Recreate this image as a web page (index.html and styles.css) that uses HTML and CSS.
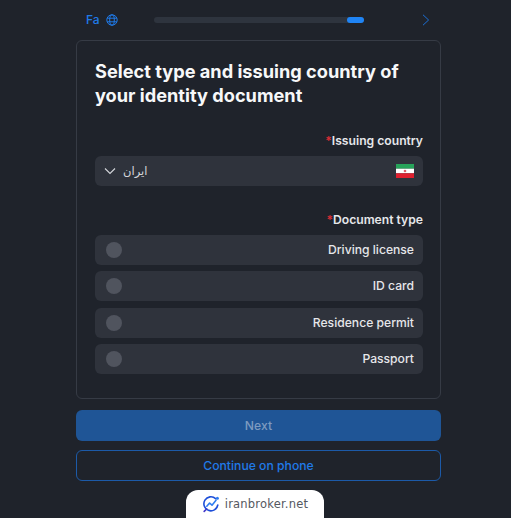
FILE: index.html
```html
<!DOCTYPE html>
<html lang="en">
<head>
<meta charset="utf-8">
<title>Identity document</title>
<link rel="stylesheet" href="styles.css">
</head>
<body>
<main class="page">
  <header class="topbar">
    <div class="lang">
      <span>Fa</span>
      <svg class="globe" viewBox="0 0 12 12" width="12" height="12" fill="none" stroke="#1f7ae8" stroke-width="1">
        <circle cx="6" cy="6" r="5.2"/>
        <ellipse cx="6" cy="6" rx="2.3" ry="5.2"/>
        <path d="M1.2 4.2h9.6M1.2 7.8h9.6"/>
      </svg>
    </div>
    <div class="progress"><div class="progress-fill"></div></div>
    <svg class="next-arrow" viewBox="0 0 8 12" width="8" height="12" fill="none" stroke="#1c6fd6" stroke-width="1">
      <path d="M1 .8 6.6 6 1 11.2"/>
    </svg>
  </header>

  <section class="card">
    <h1 class="title">Select type and issuing country of your identity document</h1>

    <div class="field country-field">
      <label class="label"><span class="star">*</span>Issuing country</label>
      <div class="select">
        <div class="select-value">
          <svg class="chevron" viewBox="0 0 12 8" width="12" height="8" fill="none" stroke="#d5d7db" stroke-width="1.1">
            <path d="M1 1.5 6 6.5 11 1.5"/>
          </svg>
          <span class="country-name" lang="fa" dir="rtl">ایران</span>
        </div>
        <svg class="flag" viewBox="0 0 18 14" width="18" height="14">
          <rect width="18" height="4.7" fill="#27a35a"/>
          <rect y="4.7" width="18" height="4.6" fill="#fff"/>
          <rect y="9.3" width="18" height="4.7" fill="#e0202f"/>
          <circle cx="9" cy="7" r="1.3" fill="#e0606a"/>
        </svg>
      </div>
    </div>

    <div class="field">
      <label class="label"><span class="star">*</span>Document type</label>
      <div class="options">
        <div class="option"><span class="radio"></span><span class="option-text">Driving license</span></div>
        <div class="option"><span class="radio"></span><span class="option-text">ID card</span></div>
        <div class="option"><span class="radio"></span><span class="option-text">Residence permit</span></div>
        <div class="option"><span class="radio"></span><span class="option-text">Passport</span></div>
      </div>
    </div>
  </section>

  <button class="btn btn-primary" type="button">Next</button>
  <button class="btn btn-outline" type="button">Continue on phone</button>

  <div class="brand">
    <svg class="brand-logo" viewBox="0 0 18 18" width="18" height="18" fill="none">
      <path d="M13.6 3.6A7 7 0 1 0 15.8 10" stroke="#1d4ed8" stroke-width="1.6" stroke-linecap="round"/>
      <path d="M4.8 11.2 7.6 8l2.4 2.2 4-5" stroke="#2f7df0" stroke-width="1.6" stroke-linecap="round" stroke-linejoin="round"/>
      <circle cx="15.4" cy="3.2" r="1.5" fill="#2f7df0"/>
      <path d="M2.2 16.4 4.6 14" stroke="#4338ca" stroke-width="1.6" stroke-linecap="round"/>
    </svg>
    <span>iranbroker.net</span>
  </div>
</main>
</body>
</html>
```

FILE: styles.css
```css
* { box-sizing: border-box; }

html, body {
  margin: 0;
  height: 100%;
}

body {
  background: #1f232b;
  font-family: Inter, "Noto Sans", sans-serif;
  color: #f3f4f6;
  overflow: hidden;
}

.page {
  width: 365px;
  margin-left: 76px;
  display: flex;
  flex-direction: column;
}

.topbar {
  height: 40px;
  padding: 0 11px 1px 10px;
  display: flex;
  align-items: center;
}

.lang {
  display: flex;
  align-items: center;
  gap: 6px;
  width: 68px;
  color: #1f7ae8;
  font-size: 12px;
  font-weight: 500;
}

.globe { display: block; }

.progress {
  width: 210px;
  height: 6px;
  border-radius: 3px;
  background: #2e343e;
  display: flex;
  justify-content: flex-end;
}

.progress-fill {
  width: 17px;
  height: 6px;
  border-radius: 3px;
  background: #1f84f5;
}

.next-arrow {
  margin-left: auto;
  display: block;
}

.card {
  height: 359px;
  border: 1px solid #363b45;
  border-radius: 6px;
  padding: 18px 17px 0 18px;
}

.title {
  margin: 0;
  font-size: 18.2px;
  line-height: 24px;
  font-weight: 700;
  color: #f7f8f9;
}

.field { display: flex; flex-direction: column; }

.country-field { margin-top: 25px; margin-bottom: 25px; }

.label {
  height: 19px;
  text-align: right;
  font-size: 12.15px;
  line-height: 17px;
  font-weight: 600;
  color: #e6e7ea;
}

.star { color: #d92d35; }

.select {
  margin-top: 5px;
  height: 30px;
  border-radius: 6px;
  background: #2f333c;
  padding: 0 9px;
  display: flex;
  align-items: center;
  justify-content: space-between;
}

.select-value {
  display: flex;
  align-items: center;
  gap: 7px;
}

.chevron { display: block; }

.country-name {
  font-family: "DejaVu Sans", sans-serif;
  font-size: 11.5px;
  color: #d5d7db;
}

.flag { display: block; }

.options {
  margin-top: 5px;
  display: flex;
  flex-direction: column;
  gap: 6.3px;
}

.option {
  height: 30px;
  border-radius: 6px;
  background: #2f333c;
  padding: 0 9px 0 11px;
  display: flex;
  align-items: center;
  justify-content: space-between;
  font-size: 12.15px;
  font-weight: 500;
  color: #e6e7ea;
}

.option-text { margin-bottom: 1px; }

.radio {
  width: 16px;
  height: 16px;
  border-radius: 50%;
  background: #50545e;
}

.btn {
  display: block;
  width: 100%;
  height: 31px;
  border-radius: 6px;
  font-family: inherit;
  font-size: 12.2px;
  font-weight: 500;
  padding: 0;
}

.btn-primary {
  margin-top: 11px;
  background: #1f5596;
  border: 0;
  color: #7d9bc0;
}

.btn-outline {
  margin-top: 9px;
  background: transparent;
  border: 1px solid #1c5aa8;
  color: #1f7ae8;
}

.brand {
  align-self: flex-start;
  margin: 9px 0 0 110px;
  width: 138px;
  height: 28px;
  border-radius: 12px 12px 0 0;
  background: #fff;
  display: flex;
  align-items: center;
  justify-content: center;
  gap: 5px;
  color: #55585f;
  font-family: "DejaVu Sans", sans-serif;
  font-size: 11.5px;
  letter-spacing: 0.2px;
}

.brand-logo { display: block; }
```
